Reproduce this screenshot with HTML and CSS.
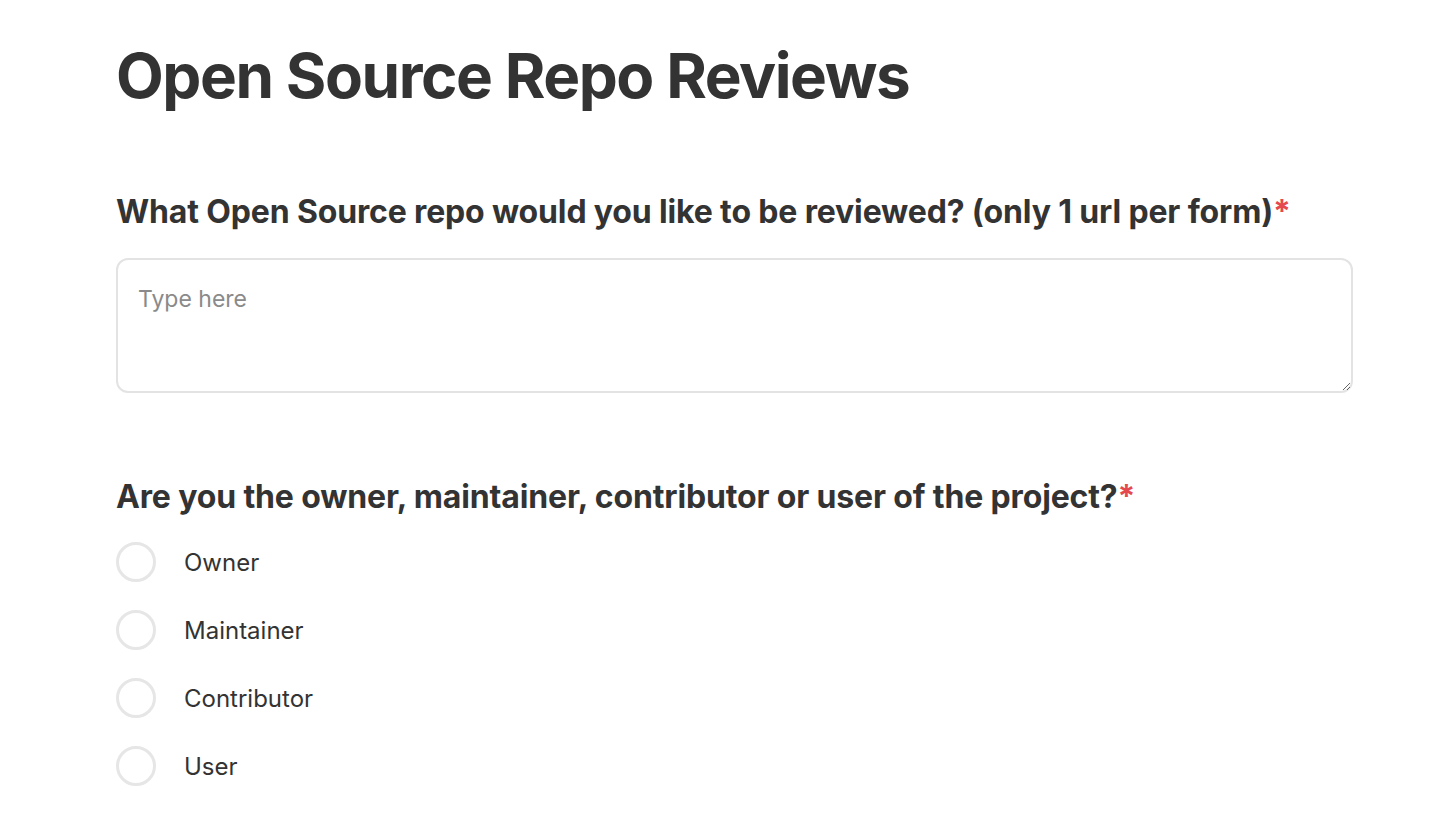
FILE: index.html
```html
<!DOCTYPE html>
<html>
<head>
<meta charset="utf-8">
<link rel="stylesheet" href="styles.css">
</head>
<body>
<main class="form">
  <h1 class="title">Open Source Repo Reviews</h1>
  <section class="question q1">
    <h2 class="q-label">What Open Source repo would you like to be reviewed? (only 1 url per form)<span class="req">*</span></h2>
    <textarea class="answer" placeholder="Type here"></textarea>
  </section>
  <section class="question q2">
    <h2 class="q-label">Are you the owner, maintainer, contributor or user of the project?<span class="req">*</span></h2>
    <div class="options">
      <label class="option"><span class="radio"></span><span class="opt-text">Owner</span></label>
      <label class="option"><span class="radio"></span><span class="opt-text">Maintainer</span></label>
      <label class="option"><span class="radio"></span><span class="opt-text">Contributor</span></label>
      <label class="option"><span class="radio"></span><span class="opt-text">User</span></label>
    </div>
  </section>
</main>
</body>
</html>
```
FILE: styles.css
```css
* { box-sizing: border-box; }
html, body { margin: 0; padding: 0; background: #fff; }
body {
  font-family: Inter, "Noto Sans", sans-serif;
  color: #333333;
}
.form {
  padding: 40px 0 0 116px;
  width: 1353px;
}
.title {
  margin: 0;
  font-size: 62px;
  font-weight: 700;
  letter-spacing: -1.45px;
  line-height: 72px;
  color: #333;
}
.question { margin: 0; }
.q1 { margin-top: 80px; }
.q-label {
  margin: 0;
  font-size: 32px;
  font-weight: 700;
  letter-spacing: -0.15px;
  line-height: 40px;
  color: #333;
}
.req { color: #e5484d; }
.answer {
  display: block;
  margin-top: 26px;
  width: 100%;
  height: 135px;
  border: 2px solid #e3e3e3;
  border-radius: 12px;
  padding: 25px 20px;
  font-family: Inter, "Noto Sans", sans-serif;
  font-size: 23px;
  line-height: 28px;
  color: #333;
  resize: vertical;
  outline: none;
}
.answer::placeholder { color: #8a8a8a; }
.q2 { margin-top: 84px; }
.options {
  margin-top: 25px;
  display: flex;
  flex-direction: column;
  gap: 28px;
}
.option {
  display: flex;
  align-items: center;
  gap: 28px;
  height: 40px;
}
.radio {
  width: 40px;
  height: 40px;
  border: 3px solid #e6e6e6;
  border-radius: 50%;
  flex: none;
}
.opt-text {
  font-size: 24px;
  color: #333;
}
```
